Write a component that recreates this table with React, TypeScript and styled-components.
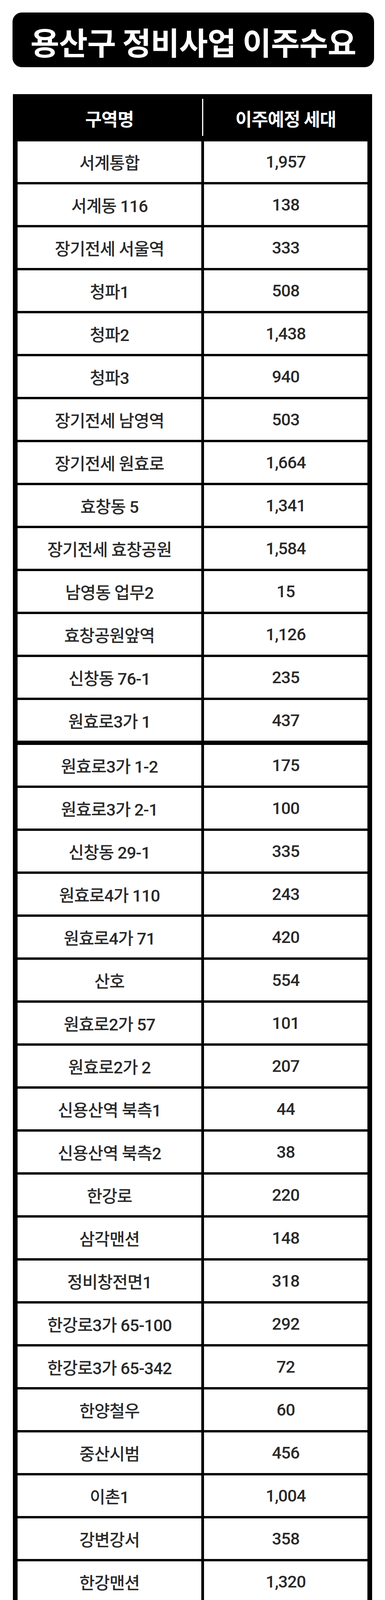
import React from "react";
import styled, { createGlobalStyle } from "styled-components";

const GlobalStyle = createGlobalStyle`
  html, body {
    margin: 0;
    padding: 0;
    background: #fff;
  }
  body {
    font-family: Roboto, "Noto Sans CJK KR", sans-serif;
  }
`;

const Page = styled.div`
  width: 985px;
  padding: 32px 0 30px 32px;
  box-sizing: border-box;
  display: flex;
  flex-direction: column;
`;

const TitleBox = styled.div`
  width: 925px;
  height: 140px;
  background: #000;
  border-radius: 24px;
  display: flex;
  align-items: center;
  justify-content: center;
`;

const TitleText = styled.h1`
  margin: 6px 0 0;
  color: #fff;
  font-family: "Noto Sans CJK KR", sans-serif;
  font-weight: 700;
  font-size: 80px;
  letter-spacing: -1px;
  line-height: 1;
`;

const Table = styled.div`
  margin: 69px 0 0 1px;
  width: 919px;
  background: #000;
  padding: 0 12px 11px;
  box-sizing: border-box;
  display: flex;
  flex-direction: column;
`;

const HeaderRow = styled.div`
  height: 121px;
  display: grid;
  grid-template-columns: 470px 7px 418px;
  align-items: center;
`;

const HeaderCell = styled.div`
  color: #fff;
  font-family: "Noto Sans CJK KR", sans-serif;
  font-weight: 700;
  font-size: 46px;
  letter-spacing: -1px;
  text-align: center;
`;

const HeaderDivider = styled.div`
  justify-self: center;
  width: 3px;
  height: 95px;
  margin-top: -2px;
  background: #fff;
`;

const Body = styled.div`
  display: flex;
  flex-direction: column;
  gap: 6px;
`;

const Row = styled.div<{ $thick?: boolean; $total?: boolean }>`
  display: grid;
  grid-template-columns: 470px 418px;
  column-gap: 7px;
  height: ${(p) => (p.$total ? "108px" : "104px")};
  margin-bottom: ${(p) => (p.$thick ? "5px" : "0")};
  margin-top: ${(p) => (p.$total ? "7px" : "0")};
`;

const Cell = styled.div<{ $total?: boolean }>`
  background: ${(p) => (p.$total ? "#e94b4e" : "#fff")};
  color: ${(p) => (p.$total ? "#fff" : "#2a2a2a")};
  font-size: ${(p) => (p.$total ? "58px" : "43px")};
  font-weight: ${(p) => (p.$total ? 700 : 500)};
  letter-spacing: -1px;
  display: flex;
  align-items: center;
  justify-content: center;
  white-space: nowrap;
`;

const rows: [string, string][] = [
  ["서계통합", "1,957"],
  ["서계동 116", "138"],
  ["장기전세 서울역", "333"],
  ["청파1", "508"],
  ["청파2", "1,438"],
  ["청파3", "940"],
  ["장기전세 남영역", "503"],
  ["장기전세 원효로", "1,664"],
  ["효창동 5", "1,341"],
  ["장기전세 효창공원", "1,584"],
  ["남영동 업무2", "15"],
  ["효창공원앞역", "1,126"],
  ["신창동 76-1", "235"],
  ["원효로3가 1", "437"],
  ["원효로3가 1-2", "175"],
  ["원효로3가 2-1", "100"],
  ["신창동 29-1", "335"],
  ["원효로4가 110", "243"],
  ["원효로4가 71", "420"],
  ["산호", "554"],
  ["원효로2가 57", "101"],
  ["원효로2가 2", "207"],
  ["신용산역 북측1", "44"],
  ["신용산역 북측2", "38"],
  ["한강로", "220"],
  ["삼각맨션", "148"],
  ["정비창전면1", "318"],
  ["한강로3가 65-100", "292"],
  ["한강로3가 65-342", "72"],
  ["한양철우", "60"],
  ["중산시범", "456"],
  ["이촌1", "1,004"],
  ["강변강서", "358"],
  ["한강맨션", "1,320"],
  ["한강삼익", "504"],
  ["왕궁", "500"],
  ["반도", "384"],
  ["신동아", "2,652"],
  ["후암1", "1,128"],
  ["갈월동 52-6", "392"],
  ["후암동 110-2", "271"],
  ["후암동 195-1", "269"],
  ["동후암1", "1,497"],
  ["동후암2", "882"],
  ["동후암3", "1,339"],
  ["남산1", "940"],
  ["남산2", "313"],
  ["남산3", "600"],
  ["용산1", "582"],
  ["용산3", "1,061"],
  ["용산4", "446"],
  ["남산대림", "400"],
  ["이태원1", "886"],
  ["이태원2", "882"],
  ["이태원3", "632"],
  ["청화", "578"],
  ["한남1", "549"],
  ["한남2", "1,359"],
  ["한남3", "4,423"],
  ["한남4", "1,607"],
  ["한남5", "1,809"],
  ["한남한성", "125"],
];

// thicker black line after these rows (seams in the original image)
const thickAfter = new Set(["원효로3가 1", "후암동 195-1"]);

function App() {
  return (
    <>
      <GlobalStyle />
      <Page>
        <TitleBox>
          <TitleText>용산구 정비사업 이주수요</TitleText>
        </TitleBox>
        <Table>
          <HeaderRow>
            <HeaderCell>구역명</HeaderCell>
            <HeaderDivider />
            <HeaderCell>이주예정 세대</HeaderCell>
          </HeaderRow>
          <Body>
            {rows.map(([name, count]) => (
              <Row key={name} $thick={thickAfter.has(name)}>
                <Cell>{name}</Cell>
                <Cell>{count}</Cell>
              </Row>
            ))}
            <Row $total>
              <Cell $total>계</Cell>
              <Cell $total>45,694</Cell>
            </Row>
          </Body>
        </Table>
      </Page>
    </>
  );
}

export default App;
